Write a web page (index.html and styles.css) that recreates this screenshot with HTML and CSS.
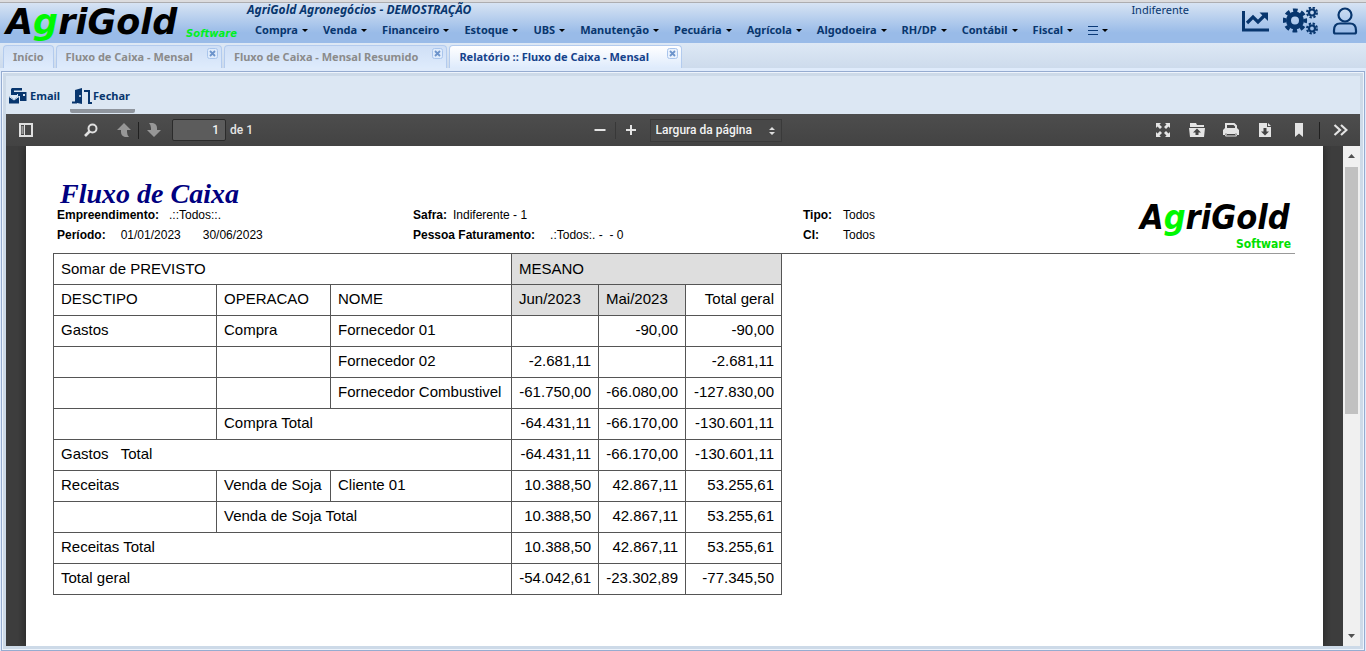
FILE: index.html
```html
<!DOCTYPE html>
<html lang="pt-BR">
<head>
<meta charset="utf-8">
<title>AgriGold Agronegócios</title>
<link rel="stylesheet" href="styles.css">
</head>
<body>
<header class="header">
  <div class="brand"><span class="brand-name">A<span class="green">g</span>riGold</span><span class="brand-sub">Software</span></div>
  <div class="header-main">
    <div class="header-top"><span class="company">AgriGold Agronegócios - DEMOSTRAÇÃO</span><span class="season">Indiferente</span></div>
    <nav class="menu">
      <button class="menu-item">Compra</button><button class="menu-item">Venda</button><button class="menu-item">Financeiro</button><button class="menu-item">Estoque</button><button class="menu-item">UBS</button><button class="menu-item">Manutenção</button><button class="menu-item">Pecuária</button><button class="menu-item">Agrícola</button><button class="menu-item">Algodoeira</button><button class="menu-item">RH/DP</button><button class="menu-item">Contábil</button><button class="menu-item">Fiscal</button><button class="menu-item" aria-label="Mais"><svg width="10" height="10" viewBox="0 0 10 10"><path d="M0 1.5h10M0 5.500h10M0 9.500h10" stroke="#0b3a77"/></svg></button>
    </nav>
  </div>
  <div class="header-icons">
    <button class="plain" aria-label="Gráficos"><svg width="28" height="22" viewBox="0 0 28 22"><path d="M1.500 1v19H27" fill="none" stroke="#08366e" stroke-width="3"/><path d="M5 13l6-6 5 5 6-6" fill="none" stroke="#08366e" stroke-width="3.200"/><path d="M17.500 2.500H26v8.500z" fill="#08366e"/></svg></button>
    <button class="plain" aria-label="Configurações"><svg width="36" height="28" viewBox="0 0 36 28" fill="none" stroke="#08366e"><circle cx="12" cy="13.500" r="6.500" stroke-width="5"/><circle cx="12" cy="13.500" r="10.300" stroke-width="3.600" stroke-dasharray="4.600 3.490" stroke-dashoffset="2.300"/><circle cx="29" cy="5.500" r="3" stroke-width="2.200"/><circle cx="29" cy="5.500" r="5" stroke-width="2" stroke-dasharray="2.300 1.627"/><circle cx="29" cy="21.500" r="3" stroke-width="2.200"/><circle cx="29" cy="21.500" r="5" stroke-width="2" stroke-dasharray="2.300 1.627"/></svg></button>
    <button class="plain" aria-label="Usuário"><svg width="26" height="28" viewBox="0 0 26 28" fill="none" stroke="#08366e" stroke-width="2.200"><circle cx="13" cy="8" r="6.500"/><path d="M8 16.500h10q6 0 6 7v1.500q0 1.500-1.500 1.500h-19q-1.500 0-1.500-1.500V23.500q0-7 6-7z"/></svg></button>
  </div>
</header>

<div class="tabs" role="tablist">
  <div class="tab"><button class="tab-label" role="tab">Início</button></div>
  <div class="tab closable"><button class="tab-label" role="tab">Fluxo de Caixa - Mensal</button><button class="tab-close" aria-label="Fechar aba"><svg width="11" height="11" viewBox="0 0 11 11"><rect x=".5" y=".5" width="10" height="10" rx="2" fill="#dfebfb" stroke="#a9c5ec"/><path d="M3 3l5 5M8 3l-5 5" stroke="#6d94cb" stroke-width="1.800"/></svg></button></div>
  <div class="tab closable"><button class="tab-label" role="tab">Fluxo de Caixa - Mensal Resumido</button><button class="tab-close" aria-label="Fechar aba"><svg width="11" height="11" viewBox="0 0 11 11"><rect x=".5" y=".5" width="10" height="10" rx="2" fill="#dfebfb" stroke="#a9c5ec"/><path d="M3 3l5 5M8 3l-5 5" stroke="#6d94cb" stroke-width="1.800"/></svg></button></div>
  <div class="tab closable active"><button class="tab-label" role="tab" aria-selected="true">Relatório :: Fluxo de Caixa - Mensal</button><button class="tab-close" aria-label="Fechar aba"><svg width="11" height="11" viewBox="0 0 11 11"><rect x=".5" y=".5" width="10" height="10" rx="2" fill="#eaf2fd" stroke="#a9c5ec"/><path d="M3 3l5 5M8 3l-5 5" stroke="#6d94cb" stroke-width="1.800"/></svg></button></div>
</div>

<main class="panel">
 <div class="panel-inner">
  <div class="actions">
    <button class="action"><svg width="18" height="16" viewBox="0 0 18 16" fill="#08366e"><path d="M3 0h10v2.500H5V4h8v2H8v1H2V1z"/><path d="M9 4h8.500v9H11V8H9z"/><path d="M14 6h2v2h-2z" fill="#dce7f3"/><path d="M0 8l5 3.500L10 8v7.500H0z"/><path d="M0 8.500l5 3.500 5-3.500" fill="none" stroke="#dce7f3"/></svg>Email</button>
    <button class="action hover"><svg width="20" height="16" viewBox="0 0 20 16"><path d="M3 2l7-2v16l-7-1.500z" fill="#08366e"/><path d="M0 14.500h5M12 3h5v12h3" fill="none" stroke="#08366e" stroke-width="2"/><circle cx="8" cy="8" r="1" fill="#dce7f3"/></svg>Fechar</button>
  </div>

  <div class="pdfbar">
    <div class="pdf-left">
      <button class="pbtn side" aria-label="Painel lateral"><svg width="14" height="14" viewBox="0 0 14 14"><path d="M1 1h12v12H1z" fill="none" stroke="#e0e0e0" stroke-width="2"/><path d="M3.500 3v8" stroke="#999" stroke-width="2"/><path d="M5.500 1v12" stroke="#e0e0e0"/></svg></button>
      <button class="pbtn find" aria-label="Localizar"><svg width="14" height="14" viewBox="0 0 14 14" fill="none" stroke="#e0e0e0"><circle cx="8.500" cy="5.500" r="4" stroke-width="2"/><path d="M5.500 8.500L1 13" stroke-width="2.600"/></svg></button>
      <button class="pbtn" aria-label="Página anterior"><svg width="14" height="14" viewBox="0 0 14 14"><path d="M7 0l7 7h-4v2q0 3 2 5H8Q4 13 4 9V7H0z" fill="#979797"/></svg></button>
      <span class="sep"></span>
      <button class="pbtn" aria-label="Próxima página"><svg width="14" height="14" viewBox="0 0 14 14"><path d="M7 14L0 7h4V5q0-3-2-5h4q4 1 4 5v2h4z" fill="#979797"/></svg></button>
      <input class="page-no" type="text" value="1" aria-label="Página"><span class="page-of">de 1</span>
    </div>
    <div class="pdf-center">
      <button class="pbtn" aria-label="Reduzir"><svg width="12" height="12" viewBox="0 0 12 12"><path d="M0.500 6h11" stroke="#e4e4e4" stroke-width="2"/></svg></button>
      <span class="sep faint"></span>
      <button class="pbtn" aria-label="Ampliar"><svg width="12" height="12" viewBox="0 0 12 12"><path d="M1 6h10M6 1v10" stroke="#e4e4e4" stroke-width="2"/></svg></button>
      <div class="zoom"><select aria-label="Zoom"><option>Largura da página</option></select><svg class="zoom-arrows" width="6" height="8" viewBox="0 0 6 8"><path d="M3 0l3 3H0zM3 8l3-3H0z" fill="#ddd"/></svg></div>
    </div>
    <div class="pdf-right">
      <button class="pbtn" aria-label="Apresentação"><svg width="14" height="14" viewBox="0 0 14 14"><path d="M0 0h5L3.500 1.500 6 4 4 6 1.500 3.500 0 5zM14 0v5l-1.500-1.500L10 6 8 4l2.500-2.500L9 0zM0 14V9l1.500 1.500L4 8l2 2-2.500 2.500L5 14zM14 14H9l1.500-1.500L8 10l2-2 2.500 2.500L14 9z" fill="#e4e4e4"/></svg></button>
      <button class="pbtn" aria-label="Abrir"><svg width="16" height="14" viewBox="0 0 16 14"><path d="M1 0h6l1 2h7v2H1zM0 5h16l-1 9H1z" fill="#e4e4e4"/><path d="M8 5.500l4 4H9.500V12h-3V9.500H4z" fill="#444"/></svg></button>
      <button class="pbtn" aria-label="Imprimir"><svg width="16" height="14" viewBox="0 0 16 14"><path d="M3 6V1h8l2 2v3" fill="none" stroke="#e4e4e4" stroke-width="2"/><path d="M2 5h12l2 2v5h-2l-1-2H3l-1 2H0V7z" fill="#e4e4e4"/><path d="M3.500 10.500h9L13.500 13h-11z" fill="#444" stroke="#e4e4e4"/></svg></button>
      <button class="pbtn" aria-label="Baixar"><svg width="12" height="14" viewBox="0 0 12 14"><path d="M0 0h8v4h4v10H0zM9 0l3 3H9z" fill="#e4e4e4"/><path d="M4.500 5h3v3.500H10L6 12.500l-4-4h2.500z" fill="#444"/></svg></button>
      <button class="pbtn" aria-label="Marcador"><svg width="8" height="14" viewBox="0 0 8 14"><path d="M0 0h8v14L4 10.500 0 14z" fill="#e4e4e4"/></svg></button>
      <span class="sep"></span>
      <button class="pbtn last" aria-label="Ferramentas"><svg width="15" height="12" viewBox="0 0 15 12"><path d="M1.500 1L7 6l-5.500 5M8 1l5.500 5L8 11" fill="none" stroke="#e4e4e4" stroke-width="2.200"/></svg></button>
    </div>
  </div>

  <div class="viewer">
    <article class="page">
      <div class="report-head">
        <div class="report-info">
          <h1 class="report-title">Fluxo de Caixa</h1>
          <dl class="fields">
            <div class="field"><dt>Empreendimento:</dt><dd>.::Todos::.</dd></div>
            <div class="field"><dt>Safra:</dt><dd class="near">Indiferente - 1</dd></div>
            <div class="field"><dt class="short">Tipo:</dt><dd class="near">Todos</dd></div>
            <div class="field"><dt>Período:</dt><dd class="mid">01/01/2023</dd><dd class="wide">30/06/2023</dd></div>
            <div class="field"><dt>Pessoa Faturamento:</dt><dd class="mid">.:Todos:. -&nbsp; - 0</dd></div>
            <div class="field"><dt class="short">CI:</dt><dd class="near">Todos</dd></div>
          </dl>
        </div>
        <div class="report-logo"><span class="logo-name">A<span class="green">g</span>riGold</span><span class="logo-sub">Software</span></div>
      </div>
      <table class="report">
        <colgroup><col class="c1"><col class="c2"><col class="c3"><col class="c4"><col class="c4"><col class="c5"></colgroup>
        <tr><td colspan="3">Somar de PREVISTO</td><td colspan="3" class="shade">MESANO</td></tr>
        <tr><td>DESCTIPO</td><td>OPERACAO</td><td>NOME</td><td class="shade">Jun/2023</td><td class="shade">Mai/2023</td><td class="num">Total geral</td></tr>
        <tr><td>Gastos</td><td>Compra</td><td>Fornecedor 01</td><td></td><td class="num">-90,00</td><td class="num">-90,00</td></tr>
        <tr><td></td><td></td><td>Fornecedor 02</td><td class="num">-2.681,11</td><td></td><td class="num">-2.681,11</td></tr>
        <tr><td></td><td></td><td>Fornecedor Combustivel</td><td class="num">-61.750,00</td><td class="num">-66.080,00</td><td class="num">-127.830,00</td></tr>
        <tr><td></td><td colspan="2">Compra Total</td><td class="num">-64.431,11</td><td class="num">-66.170,00</td><td class="num">-130.601,11</td></tr>
        <tr><td colspan="3">Gastos &nbsp; Total</td><td class="num">-64.431,11</td><td class="num">-66.170,00</td><td class="num">-130.601,11</td></tr>
        <tr><td>Receitas</td><td>Venda de Soja</td><td>Cliente 01</td><td class="num">10.388,50</td><td class="num">42.867,11</td><td class="num">53.255,61</td></tr>
        <tr><td></td><td colspan="2">Venda de Soja Total</td><td class="num">10.388,50</td><td class="num">42.867,11</td><td class="num">53.255,61</td></tr>
        <tr><td colspan="3">Receitas Total</td><td class="num">10.388,50</td><td class="num">42.867,11</td><td class="num">53.255,61</td></tr>
        <tr><td colspan="3">Total geral</td><td class="num">-54.042,61</td><td class="num">-23.302,89</td><td class="num">-77.345,50</td></tr>
      </table>
    </article>
    <div class="scroll">
      <svg width="7" height="4" viewBox="0 0 7 4"><path d="M3.500 0L7 4H0z" fill="#505050"/></svg>
      <div class="thumb"></div>
      <svg width="7" height="4" viewBox="0 0 7 4"><path d="M3.500 4L7 0H0z" fill="#505050"/></svg>
    </div>
  </div>
 </div>
</main>
</body>
</html>
```

FILE: styles.css
```css
* { box-sizing: border-box; }
body {
  margin: 0;
  height: 100vh;
  display: flex;
  flex-direction: column;
  overflow: hidden;
  background: #dfebfb;
  font: 11px/14px "Noto Sans", sans-serif;
  color: #08366e;
}
button { border: 0; padding: 0; margin: 0; background: none; font: inherit; color: inherit; white-space: nowrap; }
svg { display: block; flex: none; }
.plain { display: flex; }
.green { color: #00f800; }

/* Header */
.header {
  flex: none;
  height: 43px;
  display: flex;
  border-top: 2px solid #dcdcde;
  box-shadow: inset 0 1px #adadb0;
  background: linear-gradient(#d9e5f4, #99bbe8 75%);
}
.brand {
  display: flex;
  align-items: flex-end;
  justify-content: space-between;
  width: 247px;
  padding: 0 10px 0 6px;
  color: #000;
  font-family: "DejaVu Sans", sans-serif;
  font-weight: bold;
  font-style: italic;
}
.brand-name { font-size: 35px; line-height: 41px; }
.brand-sub { padding-bottom: 3px; color: #00f020; font-size: 10px; line-height: 12px; }
.header-main { flex: 1; min-width: 0; }
.header-top { display: flex; justify-content: space-between; padding-top: 1px; padding-right: 33px; }
.company { font-size: 12px; font-weight: bold; font-style: italic; }
.menu { display: flex; gap: 15px; padding: 6px 0 0 8px; }
.menu-item { display: flex; align-items: center; gap: 4px; font-weight: bold; }
.menu-item::after { content: ""; border: 3px solid transparent; border-top-color: #000; border-bottom: 0; }
.header-icons { display: flex; align-items: center; gap: 13px; padding: 0 8px 4px 20px; }

/* Tabs */
.tabs {
  flex: none;
  display: flex;
  align-items: flex-end;
  gap: 2px;
  height: 25px;
  padding: 0 3px;
  background: linear-gradient(#dde8f5, #cddbec);
}
.tab {
  display: flex;
  height: 23px;
  padding: 0 9px;
  border: 1px solid #b3cbee;
  border-bottom: 0;
  border-radius: 4px 4px 0 0;
  background: linear-gradient(#cfdff6, #deebfc);
  color: #8b8b8b;
  font-weight: bold;
}
.closable { padding-right: 3px; gap: 14px; }
.tab-close { align-self: flex-start; padding-top: 2px; }
.tab.active { gap: 18px; background: linear-gradient(#fff, #deebfc); color: #15428b; }

/* Panel */
.panel {
  flex: 1;
  min-height: 0;
  display: flex;
  margin: 3px 1px 0;
  padding: 1px;
  border: 1px solid #96acd0;
  background: #eef4fc;
}
.panel-inner { flex: 1; min-width: 0; display: flex; flex-direction: column; border: 3px solid #cddae8; background: #dce7f3; }
.actions { flex: none; height: 38px; padding: 12px 0 0 1px; display: flex; gap: 8px; }
.action { display: flex; align-items: center; gap: 3px; height: 24px; padding: 0 2px 8px; font-weight: bold; }
.action.hover { gap: 1px; padding-right: 5px; height: 25px; padding-bottom: 5px; border-bottom: 4px solid #8f959d; border-radius: 0 0 2px 2px; }

/* PDF toolbar */
.pdfbar {
  flex: none;
  height: 32px;
  display: grid;
  grid-template-columns: 1fr auto 1fr;
  align-items: center;
  background: linear-gradient(#4d4d4d, #434343);
  color: #e4e4e4;
  font: 500 12px/14px Roboto, sans-serif;
}
.pdf-left, .pdf-center, .pdf-right { display: flex; align-items: center; }
.pdf-right { justify-content: flex-end; gap: 6px; }
.pdf-center { padding-left: 1px; }
.pbtn { display: flex; align-items: center; justify-content: center; width: 28px; height: 25px; }
.pdf-left .pbtn { width: 31px; }
.pdf-left .side { width: 40px; margin-right: 29px; }
.pdf-left .find { margin-right: 2px; }
.pdf-right .last { width: 40px; margin-left: -6px; }
.sep { width: 1px; height: 17px; background: #202020; }
.pdf-left .sep { margin: 0 -1px; }
.sep.faint { background: #383838; margin: 0 1px; }
.page-no {
  width: 54px;
  height: 22px;
  margin: 0 4px 0 3px;
  padding: 0 6px;
  border: 1px solid #2b2b2b;
  border-radius: 2px;
  background: #5c5c5c;
  color: #f2f2f2;
  font: inherit;
  text-align: right;
}
.zoom { position: relative; margin-left: 5px; }
.zoom select {
  width: 132px;
  height: 23px;
  padding: 0 5px;
  border: 1px solid #3a3a3a;
  appearance: none;
  background: #484848;
  color: #f2f2f2;
  font: inherit;
}
.zoom-arrows { position: absolute; right: 7px; top: 8px; }

/* Document */
.viewer { flex: 1; min-height: 0; display: flex; background: #3d3d3d; }
.page {
  flex: 1;
  min-width: 0;
  margin: 0 20px;
  padding: 28px 28px 0 27px;
  background: #fff;
  box-shadow: 0 0 8px #222;
  clip-path: inset(0 -8px);
  color: #000;
  font-family: "Liberation Sans", sans-serif;
}
.report-head { display: flex; height: 80px; }
.report-info { flex: 1; padding-left: 4px; border-bottom: 1px solid #555; }
.report-title { margin: 6px 0 0 3px; color: #000080; font: italic bold 28px/28px "Liberation Serif", serif; }
.fields { display: grid; grid-template-columns: 356px 390px 1fr; row-gap: 6px; margin: 0; font-size: 12px; line-height: 14px; }
.field { display: flex; white-space: nowrap; }
.field dt { font-weight: bold; }
.field dd { margin: 0 0 0 10px; }
.field dt.short { width: 34px; }
.field dd.near { margin-left: 6px; }
.field dd.mid { margin-left: 15px; }
.field dd.wide { margin-left: 22px; }
.report-logo {
  display: flex;
  flex-direction: column;
  justify-content: flex-end;
  width: 155px;
  padding-bottom: 2px;
  border-bottom: 1px solid #999;
  font-family: "DejaVu Sans Condensed", sans-serif;
  font-weight: bold;
  font-style: italic;
}
.logo-name { font-size: 34px; line-height: 40px; }
.logo-sub { align-self: flex-end; padding-right: 4px; color: #00e000; font-size: 12px; line-height: 14px; font-style: normal; }

.report { table-layout: fixed; width: 729px; border-collapse: collapse; font-size: 15px; line-height: 18px; }
.c1 { width: 163px; }
.c2 { width: 114px; }
.c3 { width: 181px; }
.c4 { width: 87px; }
.c5 { width: 96px; }
.report td { height: 31px; padding: 0 6px 1px 7px; border: 1px solid #555; white-space: nowrap; }
.report tr:first-child td { height: 30px; padding-bottom: 0; border-top: 0; }
.report .num { padding: 0 7px 1px 2px; text-align: right; }
.report .shade { background: #dedede; }

.scroll { flex: none; width: 17px; display: flex; flex-direction: column; align-items: center; padding: 8px 0; background: #f0f0f0; }
.thumb { width: 13px; height: 51%; margin-top: 9px; margin-bottom: auto; background: #c1c1c1; }
```
